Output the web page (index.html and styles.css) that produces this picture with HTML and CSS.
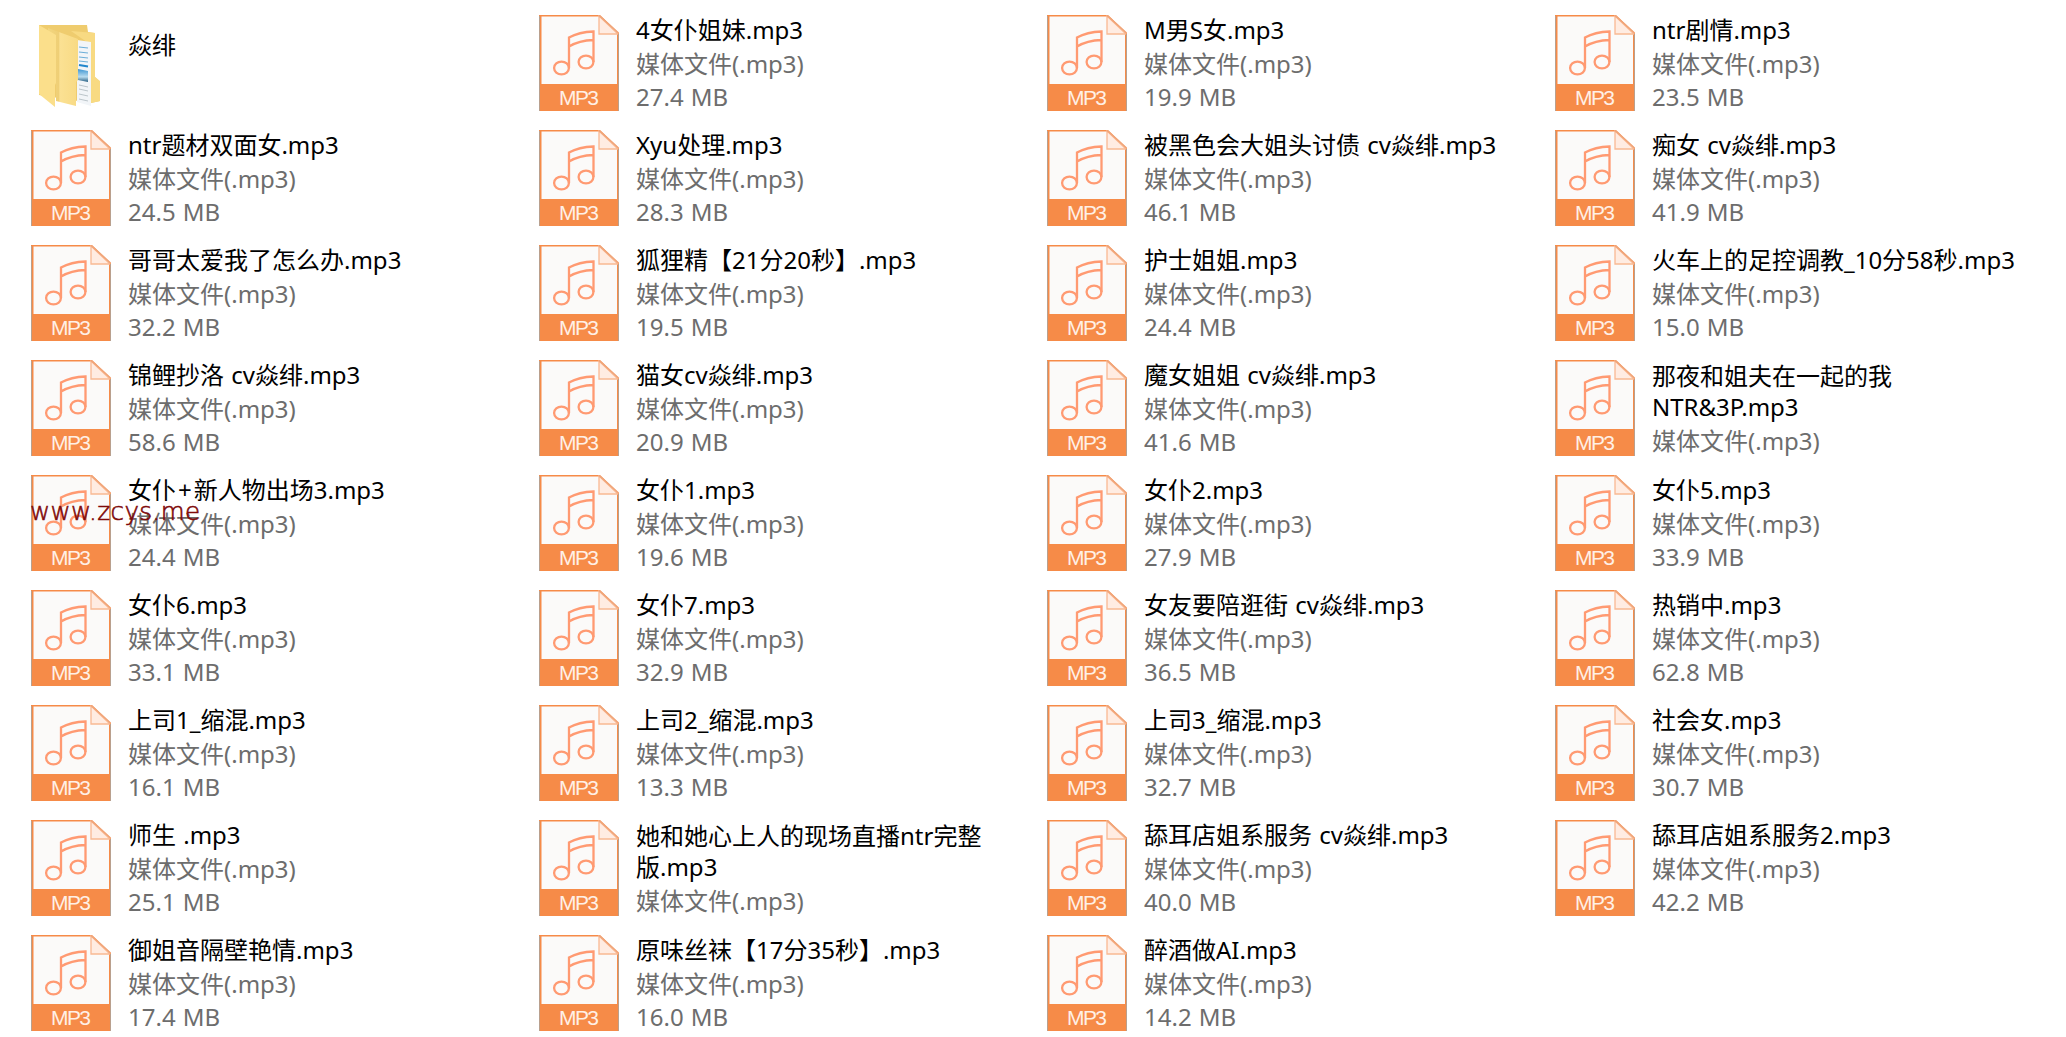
FILE: index.html
```html
<!DOCTYPE html>
<html lang="zh-CN">
<head>
<meta charset="utf-8">
<title>焱绯</title>
<link rel="stylesheet" href="styles.css">
</head>
<body>
<svg class="defs" width="0" height="0" aria-hidden="true">
  <symbol id="mp3" viewBox="0 0 80 96">
    <path d="M0 0H61L80 18V96H0Z" fill="#f68b48"/>
    <path d="M2.500 1.500H60L78 18.500V69H2.500Z" fill="#fbfaf9"/>
    <path d="M60 1V19H79Z" fill="#ffece2" stroke="#f9b993" stroke-width="1.300"/>
    <path d="M60 .5L79.500 18" stroke="#f0a57a" stroke-width="1.500"/>
    <path d="M.5 1V96M79.500 19V96" stroke="#b9a08e" stroke-width="1"/>
    <g fill="none" stroke="#ff9a72" stroke-width="2.300">
      <ellipse cx="22.500" cy="53" rx="7.400" ry="6.400"/>
      <ellipse cx="47" cy="47" rx="7.400" ry="6.400"/>
      <path d="M30 53V22.500Q40 17 54.500 16.500V47M30 31.500Q40 25.500 54.500 25"/>
    </g>
    <text x="40" y="89.500" class="badge" text-anchor="middle" textLength="40">MP3</text>
  </symbol>
</svg>
<main class="files" id="files"></main>
<div class="watermark">www.zcys.me</div>
<script src="files.js"></script>
</body>
</html>
```
FILE: styles.css
```css
body {
  margin: 0;
  background: #fff;
  font-family: "Noto Sans", "Noto Sans CJK SC", sans-serif;
  font-size: 24px;
  word-spacing: 1px;
  color: #000;
}
.defs { display: block; height: 0; }
.files {
  display: grid;
  grid-template-columns: repeat(4, 508px);
  grid-auto-rows: 115px;
  padding: 14px 0 0 31px;
  height: 1023px;
}
.file { display: flex; gap: 17px; }
.icon { flex: none; width: 80px; height: 96px; margin-top: 1px; }
.badge {
  font-family: "Liberation Sans", sans-serif;
  font-size: 21px;
  fill: #fff0e6;
}
.info { width: 366px; }
.name { line-height: 31px; }
.plus { padding: 0 2px; }
.type { line-height: 38px; color: #6d6d6d; }
.size { line-height: 27px; color: #6d6d6d; }
.wrapped { padding-top: 1px; }
.folder .info { padding-top: 15px; }
.watermark {
  position: absolute;
  left: 30px;
  top: 496px;
  font-family: "DejaVu Sans Light", "DejaVu Sans", sans-serif;
  font-weight: 200;
  font-size: 24.5px;
  line-height: 31px;
  letter-spacing: .4px;
  color: #800a0a;
  -webkit-text-stroke: .6px #800a0a;
}
```
FILE: files.js
```js
const files = [
  ["4女仆姐妹.mp3", "27.4"], ["M男S女.mp3", "19.9"], ["ntr剧情.mp3", "23.5"],
  ["ntr题材双面女.mp3", "24.5"], ["Xyu处理.mp3", "28.3"], ["被黑色会大姐头讨债 cv焱绯.mp3", "46.1"], ["痴女 cv焱绯.mp3", "41.9"],
  ["哥哥太爱我了怎么办.mp3", "32.2"], ["狐狸精【21分20秒】.mp3", "19.5"], ["护士姐姐.mp3", "24.4"], ["火车上的足控调教_10分58秒.mp3", "15.0"],
  ["锦鲤抄洛 cv焱绯.mp3", "58.6"], ["猫女cv焱绯.mp3", "20.9"], ["魔女姐姐 cv焱绯.mp3", "41.6"], ["那夜和姐夫在一起的我 NTR&3P.mp3", null],
  ["女仆+新人物出场3.mp3", "24.4"], ["女仆1.mp3", "19.6"], ["女仆2.mp3", "27.9"], ["女仆5.mp3", "33.9"],
  ["女仆6.mp3", "33.1"], ["女仆7.mp3", "32.9"], ["女友要陪逛街 cv焱绯.mp3", "36.5"], ["热销中.mp3", "62.8"],
  ["上司1_缩混.mp3", "16.1"], ["上司2_缩混.mp3", "13.3"], ["上司3_缩混.mp3", "32.7"], ["社会女.mp3", "30.7"],
  ["师生 .mp3", "25.1"], ["她和她心上人的现场直播ntr完整版.mp3", null], ["舔耳店姐系服务 cv焱绯.mp3", "40.0"], ["舔耳店姐系服务2.mp3", "42.2"],
  ["御姐音隔壁艳情.mp3", "17.4"], ["原味丝袜【17分35秒】.mp3", "16.0"], ["醉酒做AI.mp3", "14.2"]
];

const folder = `
<div class="file folder">
  <svg class="icon" viewBox="0 0 80 96">
    <defs>
      <linearGradient id="front" x1="0" x2="1" y1="0" y2="0"><stop offset="0" stop-color="#f3d67f"/><stop offset=".35" stop-color="#efcf76"/><stop offset=".4" stop-color="#fbe193"/><stop offset="1" stop-color="#f8da84"/></linearGradient>
      <linearGradient id="photo" x1="0" x2="0" y1="0" y2="1"><stop offset="0" stop-color="#3d95d2"/><stop offset=".6" stop-color="#b9dcef"/><stop offset="1" stop-color="#285f83"/></linearGradient>
    </defs>
    <path d="M8 10H56L57 17L64 18V62L69 67V86L60 88L8 80Z" fill="#efcc6e"/>
    <path d="M40 16L64 18V62L69 66V86L60 88V30Z" fill="#f8da82"/>
    <path d="M46 25L60 27V91L46 87Z" fill="#f2f5f8"/>
    <path d="M48 32L57 33M48 37L57 38M48 42L57 43M48 46L57 47" stroke="#6dafd8" stroke-width="1.200"/>
    <path d="M48 50L57 51.500" stroke="#2186cc" stroke-width="2"/>
    <path d="M47 54L57 56V67L47 65Z" fill="url(#photo)"/>
    <path d="M48 70L57 72M48 74L57 76M48 79L57 81M48 84L57 86" stroke="#bcc5ca" stroke-width="1"/>
    <path d="M17 13L47 24V65L45 67V91L25 86V68L17 64Z" fill="url(#front)"/>
    <path d="M8 10L25 20V68L24 70V92L8 79Z" fill="#fbdf8b"/>
  </svg>
  <div class="info"><div class="name">焱绯</div></div>
</div>`;

const nameMarkup = s => s.replace(/&/g, "&amp;").replace("+", '<span class="plus">+</span>');

document.getElementById("files").innerHTML = folder + files.map(([name, size]) => `
<div class="file">
  <svg class="icon"><use href="#mp3"/></svg>
  <div class="info${size ? "" : " wrapped"}">
    <div class="name">${nameMarkup(name)}</div>
    <div class="type">媒体文件(.mp3)</div>
    ${size ? `<div class="size">${size} MB</div>` : ""}
  </div>
</div>`).join("");
```
